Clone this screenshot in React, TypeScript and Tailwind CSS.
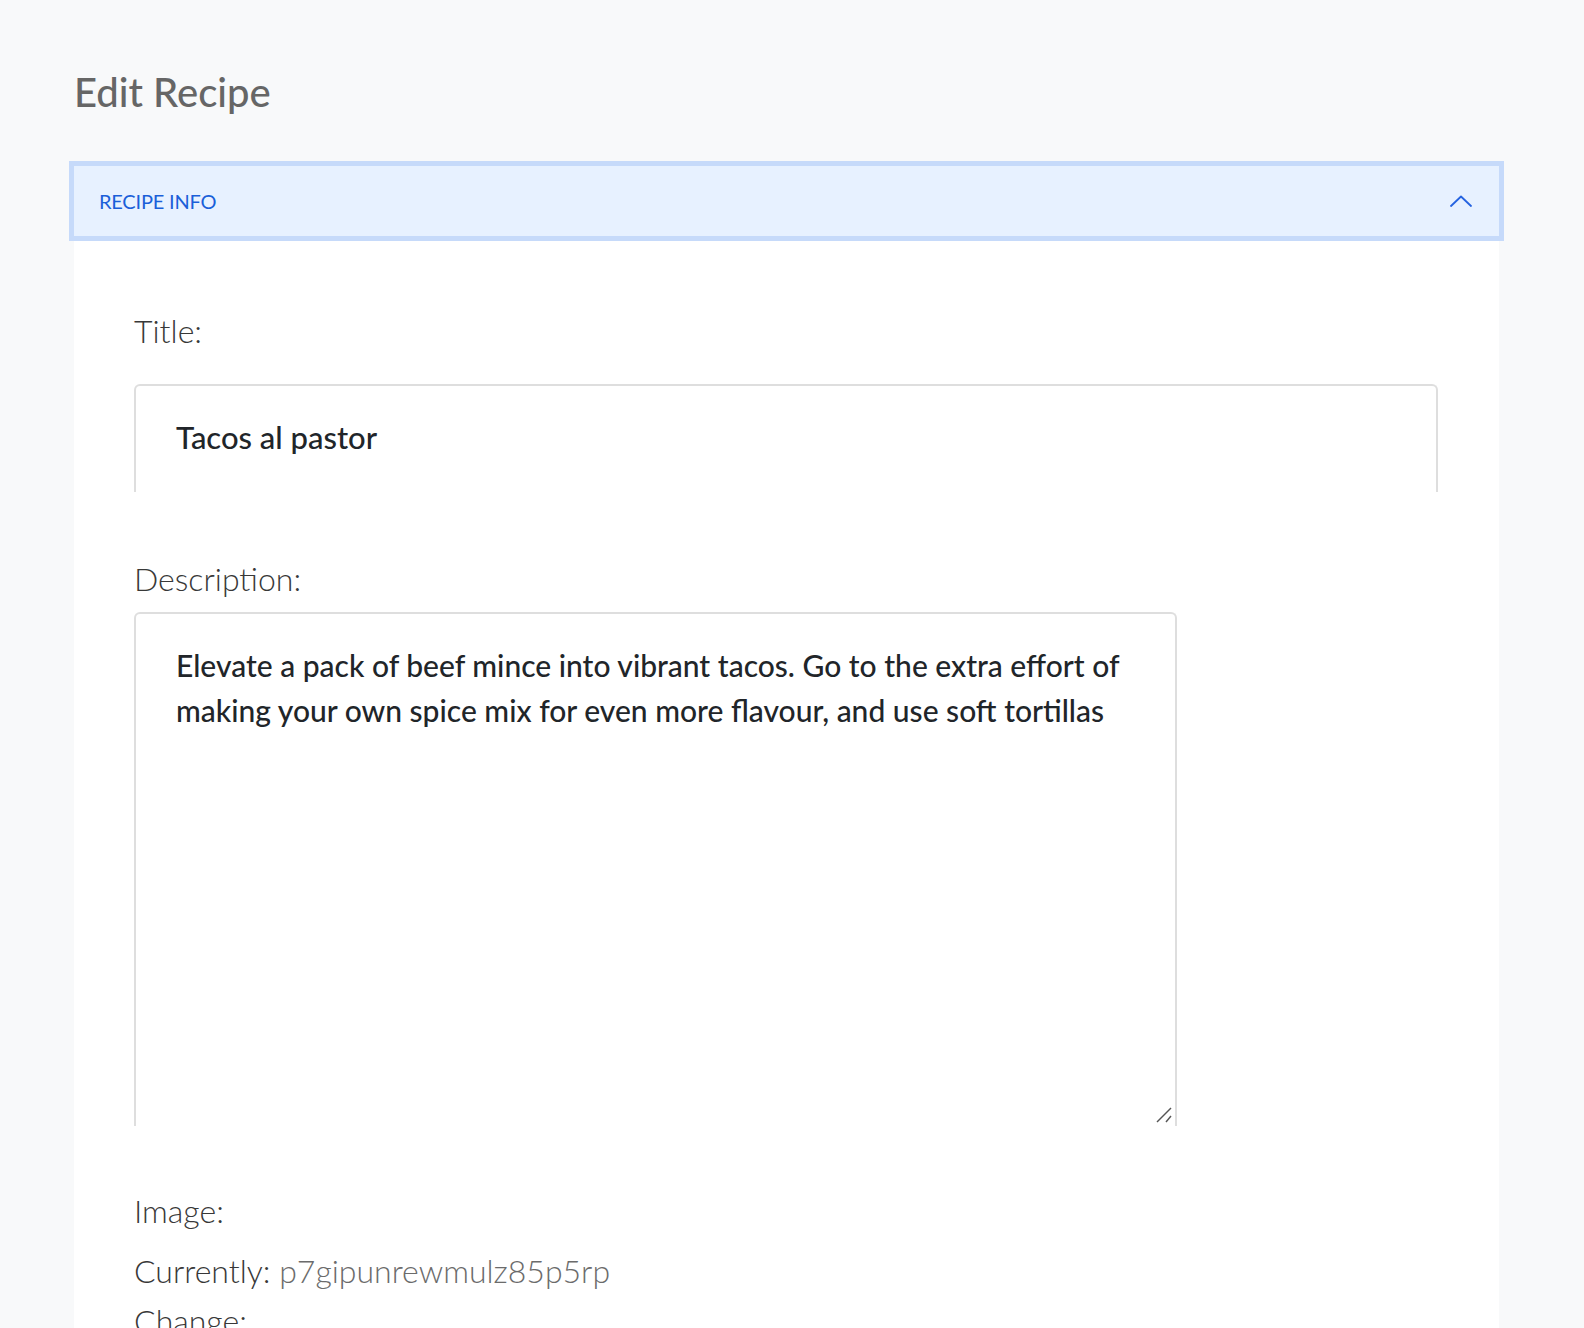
import React from "react";

export default function App() {
  return (
    <div
      className="min-h-[1328px] bg-[#f8f9fa] overflow-hidden"
      style={{ fontFamily: "Lato, 'Noto Sans', sans-serif" }}
    >
      <div className="pl-[74px] pt-[69px]">
        <h1 className="text-[40px] leading-[46px] font-medium text-[#666666] mb-[51px]">
          Edit Recipe
        </h1>
        <div className="w-[1425px] bg-white min-h-[1100px]">
          <div className="relative h-[70px] bg-[#e7f1ff] shadow-[0_0_0_5px_#c6dafa] flex items-center justify-between pl-[25px] pr-[27px]">
            <span className="text-[20px] leading-none text-[#1a5fd9] tracking-[-0.2px]">
              RECIPE INFO
            </span>
            <svg width="22" height="12" viewBox="0 0 22 12" fill="none">
              <polyline
                points="1,11 11,1.5 21,11"
                stroke="#2563e0"
                strokeWidth="1.8"
                strokeLinecap="round"
                strokeLinejoin="round"
              />
            </svg>
          </div>
          <div className="pl-[60px] pt-[76px]">
            <div className="text-[32px] leading-[38px] font-light text-[#383838]">
              Title:
            </div>
            <div className="mt-[34px] w-[1304px] h-[108px] border-t-2 border-x-2 border-[#dedede] rounded-t-[6px] pt-[33px] pl-[40px]">
              <div className="text-[31px] leading-[37px] font-medium text-[#212529]">
                Tacos al pastor
              </div>
            </div>
            <div className="mt-[68px] text-[32px] leading-[38px] font-light text-[#383838]">
              Description:
            </div>
            <div className="relative mt-[14px] w-[1043px] h-[514px] border-t-2 border-x-2 border-[#dedede] rounded-t-[6px] pt-[29px] pl-[40px]">
              <div className="text-[30px] leading-[45px] font-medium text-[#212529] whitespace-nowrap">
                <div>Elevate a pack of beef mince into vibrant tacos. Go to the extra effort of</div>
                <div>making your own spice mix for even more flavour, and use soft tortillas</div>
              </div>
              <svg
                className="absolute right-[2px] bottom-[3px]"
                width="18"
                height="16"
                viewBox="0 0 18 16"
                fill="none"
              >
                <line x1="2" y1="15" x2="16" y2="1" stroke="#555" strokeWidth="1.4" />
                <line x1="11" y1="15" x2="16" y2="9" stroke="#555" strokeWidth="1.4" />
              </svg>
            </div>
            <div className="mt-[66px] text-[32px] leading-[38px] font-light text-[#383838]">
              Image:
            </div>
            <div className="mt-[22px] text-[32px] leading-[38px] font-light text-[#383838]">
              Currently: <span className="text-[#6b6b6b]">p7gipunrewmulz85p5rp</span>
            </div>
            <div className="mt-[12px] text-[32px] leading-[38px] font-light text-[#383838]">
              Change:
            </div>
          </div>
        </div>
      </div>
    </div>
  );
}
